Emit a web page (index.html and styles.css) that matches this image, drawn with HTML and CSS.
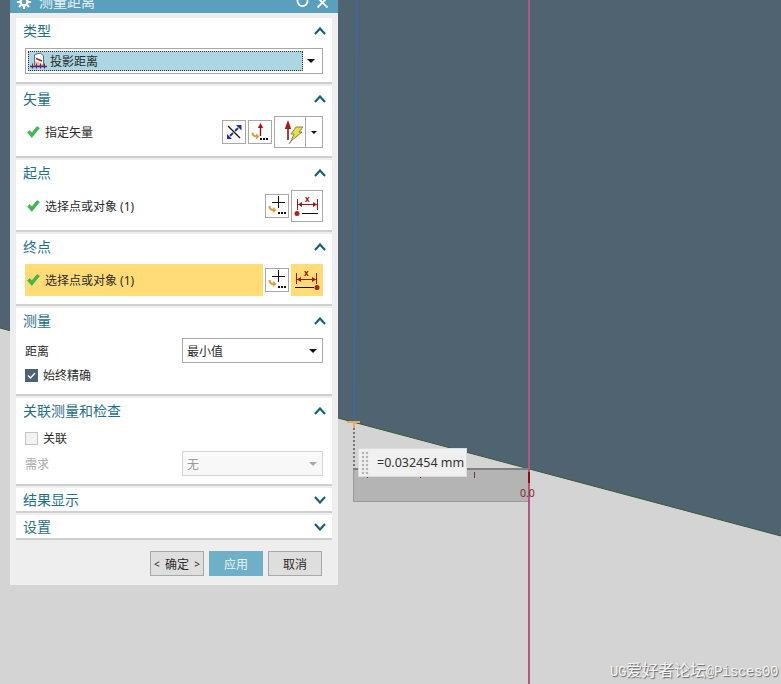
FILE: index.html
```html
<!DOCTYPE html>
<html lang="zh-CN">
<head>
<meta charset="utf-8">
<title>测量距离</title>
<link rel="stylesheet" href="styles.css">
</head>
<body>
<main class="viewport">
  <svg class="scene" width="781" height="684" viewBox="0 0 781 684">
    <rect width="781" height="684" fill="#d4d4d4"/>
    <polygon points="0,328 781,536 781,0 0,0" fill="#4f6470"/>
    <line x1="0" y1="328" x2="781" y2="536" stroke="#3a5a30" stroke-width="1"/>
    <line x1="357" y1="0" x2="354" y2="420" stroke="#3f6aa8" stroke-width="1.200"/>
    <rect x="353.500" y="468.500" width="176" height="33" fill="#b4b4b4" stroke="#999"/>
    <line x1="353" y1="469" x2="529" y2="469" stroke="#808080" stroke-width="2"/>
    <line x1="354" y1="424" x2="354" y2="468" stroke="#777" stroke-width="2" stroke-dasharray="2 2"/>
    <path d="M347 422h13M354 422v6" stroke="#e8a868" stroke-width="2" fill="none"/>
    <path d="M474.500 472v6M420.500 475v3M367.500 475v3" stroke="#8a2a2a" fill="none"/>
    <line x1="529" y1="0" x2="529" y2="684" stroke="#aa5a85" stroke-width="2"/>
    <rect x="528" y="472" width="2" height="11" fill="#8a0f0f"/>
    <text x="520" y="497" class="scene-label">0.0</text>
  </svg>

  <section class="dialog">
    <header class="titlebar">
      <svg class="gear" width="14" height="14" viewBox="0 0 14 14"><circle cx="7" cy="7" r="3.500" fill="none" stroke="#fff" stroke-width="2.400"/><path d="M7 0v3M7 11v3M0 7h3M11 7h3M2 2l2 2M10 10l2 2M12 2l-2 2M4 10l-2 2" stroke="#fff" stroke-width="2"/></svg>
      <span class="title-text">测量距离</span>
      <span class="title-actions">
        <svg width="13" height="13" viewBox="0 0 13 13"><path d="M3 1.500A5 5 0 1 0 10 1.500" fill="none" stroke="#fff" stroke-width="1.800"/></svg>
        <svg width="13" height="13" viewBox="0 0 13 13"><path d="M1.500 1.500l10 10M11.500 1.500l-10 10" stroke="#fff" stroke-width="1.800"/></svg>
      </span>
    </header>

    <div class="group group-type">
      <div class="group-head"><h2>类型</h2><svg class="chev" width="12" height="8" viewBox="0 0 12 8"><path d="M1 7l5-5.500L11 7" /></svg></div>
      <div class="select select-type">
        <div class="select-value">
          <svg width="17" height="18" viewBox="0 0 17 18"><path d="M4.500 2.500l6-1.500 3 3v9.500h-9z" fill="#fff" stroke="#56708a"/><path d="M5 9l8 3v1.500H5z" fill="#e6bcbc"/><path d="M6 6.500l6 2.500" stroke="#b02020" stroke-width="1.600"/><path d="M0 14.500h17" stroke="#1c2fb0" stroke-width="1.500"/><path d="M2.500 11.500v5M6.500 11.500v5M10.500 11.500v5M14.500 11.500v5" stroke="#a01818"/></svg>
          <span>投影距离</span>
        </div>
        <i class="caret"></i>
      </div>
    </div>

    <div class="group group-action">
      <div class="group-head"><h2>矢量</h2><svg class="chev" width="12" height="8" viewBox="0 0 12 8"><path d="M1 7l5-5.500L11 7" /></svg></div>
      <div class="row">
        <svg class="check" width="13" height="12" viewBox="0 0 13 12"><path d="M.5 6.500l4.300 5L12.500 2 10 .5 4.800 7 2.800 4.500z" fill="#3cbb4c" stroke="#2a9a3c" stroke-width=".5"/></svg>
        <span class="row-label">指定矢量</span>
        <span class="tool">
          <svg width="18" height="18" viewBox="0 0 18 18"><path d="M3 3l12 12" stroke="#111" stroke-width="1.200"/><path d="M13 5l-3 3M5 13l3-3" stroke="#1c2f9c" stroke-width="1.800"/><path d="M11 2h5.500v5.500zM2 11l5 5H2z" fill="#1c2f9c"/></svg>
        </span>
        <span class="tool">
          <svg width="20" height="20" viewBox="0 0 20 20"><path d="M10.500 14V5" stroke="#8d1212" stroke-width="1.400"/><path d="M10.500 1L7.800 6h5.400z" fill="#a51616"/><path d="M2.500 10.500q0 4 4 4" fill="none" stroke="#e59a3c" stroke-width="2"/><path d="M6 11.500l3.500 3-3.500 3z" fill="#e59a3c"/><path d="M10 16h2v2h-2zM13 16h2v2h-2zM16 16h2v2h-2z" fill="#111"/></svg>
        </span>
        <span class="split">
          <span class="split-main">
            <svg width="26" height="28" viewBox="0 0 26 28"><path d="M11 22V9" stroke="#8d1212" stroke-width="1.600"/><path d="M11 2L7.800 11h6.400z" fill="#b31515"/><path d="M19 9h7l-4 5h3L14 23l3-7h-3z" fill="#e8dc50" stroke="#6e6a30" stroke-width=".8"/><path d="M14 23l-2 3" stroke="#8a8a80" stroke-width="1.200"/></svg>
          </span>
          <span class="split-arrow"><i class="caret caret-sm"></i></span>
        </span>
      </div>
    </div>

    <div class="group group-action">
      <div class="group-head"><h2>起点</h2><svg class="chev" width="12" height="8" viewBox="0 0 12 8"><path d="M1 7l5-5.500L11 7" /></svg></div>
      <div class="row">
        <svg class="check" width="13" height="12" viewBox="0 0 13 12"><path d="M.5 6.500l4.300 5L12.500 2 10 .5 4.800 7 2.800 4.500z" fill="#3cbb4c" stroke="#2a9a3c" stroke-width=".5"/></svg>
        <span class="row-label">选择点或对象 (1)</span>
        <span class="tool">
          <svg width="20" height="20" viewBox="0 0 20 20"><path d="M11.500 0v12M5 6.500h13" stroke="#111" stroke-width="1.100"/><path d="M2.500 10q0 4 4 4" fill="none" stroke="#e59a3c" stroke-width="2"/><path d="M6 11l3.500 3-3.500 3z" fill="#e59a3c"/><path d="M11 16h2v2h-2zM14 16h2v2h-2zM17 16h2v2h-2z" fill="#111"/></svg>
        </span>
        <span class="tool tool-large">
          <svg width="30" height="26" viewBox="0 0 30 26"><path d="M5.500 6v11M25.500 6v11" stroke="#a01818"/><path d="M6 11.500h19" stroke="#a01818"/><path d="M6 11.500l4-2.500v5zM25 11.500l-4-2.500v5z" fill="#a01818"/><text x="13" y="9" class="dim-x">x</text><path d="M10 20.500h16" stroke="#111"/><circle cx="5" cy="20.500" r="2.500" fill="#b02018"/></svg>
        </span>
      </div>
    </div>

    <div class="group group-action group-active">
      <div class="group-head"><h2>终点</h2><svg class="chev" width="12" height="8" viewBox="0 0 12 8"><path d="M1 7l5-5.500L11 7" /></svg></div>
      <div class="row">
        <span class="hilite">
          <svg class="check" width="13" height="12" viewBox="0 0 13 12"><path d="M.5 6.500l4.300 5L12.500 2 10 .5 4.800 7 2.800 4.500z" fill="#3cbb4c" stroke="#2a9a3c" stroke-width=".5"/></svg>
          <span class="row-label">选择点或对象 (1)</span>
        </span>
        <span class="tool">
          <svg width="20" height="20" viewBox="0 0 20 20"><path d="M11.500 0v12M5 6.500h13" stroke="#111" stroke-width="1.100"/><path d="M2.500 10q0 4 4 4" fill="none" stroke="#e59a3c" stroke-width="2"/><path d="M6 11l3.500 3-3.500 3z" fill="#e59a3c"/><path d="M11 16h2v2h-2zM14 16h2v2h-2zM17 16h2v2h-2z" fill="#111"/></svg>
        </span>
        <span class="tool tool-large tool-hilite">
          <svg width="30" height="26" viewBox="0 0 30 26"><path d="M4.500 6v11M24.500 6v11" stroke="#a01818"/><path d="M5 12.500h19" stroke="#a01818"/><path d="M5 12.500l4-2.500v5zM24 12.500l-4-2.500v5z" fill="#a01818"/><text x="12" y="9" class="dim-x">x</text><path d="M3 20.500h19" stroke="#111"/><circle cx="25" cy="20.500" r="2.500" fill="#b02018"/></svg>
        </span>
      </div>
    </div>

    <div class="group group-measure">
      <div class="group-head"><h2>测量</h2><svg class="chev" width="12" height="8" viewBox="0 0 12 8"><path d="M1 7l5-5.500L11 7" /></svg></div>
      <div class="field">
        <span class="field-label">距离</span>
        <div class="select select-field"><span>最小值</span><i class="caret"></i></div>
      </div>
      <label class="checkline"><span class="box box-on"><svg width="13" height="13" viewBox="0 0 13 13"><path d="M3 6.500l2.500 2.500L10 4" fill="none" stroke="#fff" stroke-width="1.300"/></svg></span><span>始终精确</span></label>
    </div>

    <div class="group group-assoc">
      <div class="group-head"><h2>关联测量和检查</h2><svg class="chev" width="12" height="8" viewBox="0 0 12 8"><path d="M1 7l5-5.500L11 7" /></svg></div>
      <label class="checkline checkline-first"><span class="box"></span><span>关联</span></label>
      <div class="field field-disabled">
        <span class="field-label">需求</span>
        <div class="select select-field"><span>无</span><i class="caret"></i></div>
      </div>
    </div>

    <div class="group group-closed">
      <div class="group-head"><h2>结果显示</h2><svg class="chev" width="12" height="8" viewBox="0 0 12 8"><path d="M1 1l5 5.500L11 1" /></svg></div>
    </div>
    <div class="group group-closed">
      <div class="group-head"><h2>设置</h2><svg class="chev" width="12" height="8" viewBox="0 0 12 8"><path d="M1 1l5 5.500L11 1" /></svg></div>
    </div>

    <footer class="actions">
      <span class="btn btn-ok"><span class="btn-mark">&lt;</span><span>确定</span><span class="btn-mark">&gt;</span></span>
      <span class="btn btn-primary">应用</span>
      <span class="btn">取消</span>
    </footer>
  </section>

  <div class="readout">
    <span class="grip"></span>
    <span>=0.032454 mm</span>
  </div>

  <div class="watermark"><span class="wm-latin">UG</span>爱好者论坛<span class="wm-latin">@Pisces00</span></div>
</main>
</body>
</html>
```
FILE: styles.css
```css
* { box-sizing: border-box; }
html, body { margin: 0; padding: 0; }
body {
  font-family: "Noto Sans", "Noto Sans CJK SC", sans-serif;
  font-size: 12px;
  color: #2a2a2a;
}
.viewport { position: relative; width: 781px; height: 684px; overflow: hidden; }
.scene { position: absolute; left: 0; top: 0; display: block; }
.scene-label { font: 10.500px "Noto Sans", sans-serif; fill: #7d2a2a; }

.dialog {
  position: absolute;
  left: 10px;
  top: -13px;
  width: 328px;
  height: 598px;
  background: #eeeeee;
  display: flex;
  flex-direction: column;
}
.titlebar {
  height: 26px;
  flex: none;
  background: #5a9fbb;
  display: flex;
  align-items: center;
  padding: 4px 9px 0 7px;
  color: #e8f2f6;
}
.gear { flex: none; }
.title-text { margin-left: 8px; font-size: 14px; line-height: 20px; }
.title-actions { margin-left: auto; display: flex; gap: 7px; }

.group {
  background: #fff;
  border-bottom: 2px solid #cfcfcf;
  margin: 0 6px 2px;
  padding: 0 9px;
  flex: none;
}
.group-type { margin-top: 5px; height: 66px; }
.group-action { height: 72px; }
.group-measure, .group-assoc { height: 88px; }
.group-closed { height: 25px; }
.group-head {
  height: 24px;
  padding-top: 1px;
  display: flex;
  align-items: center;
  justify-content: space-between;
}
.group-closed .group-head { height: 23px; }
.group-head h2 {
  margin: 0 0 0 -2px;
  font-size: 14px;
  font-weight: 400;
  line-height: 20px;
  color: #1f6f8c;
}
.chev { margin-right: -3px; fill: none; stroke: #17607a; stroke-width: 2.200; }

.select {
  position: relative;
  display: flex;
  align-items: center;
  background: #fff;
  border: 1px solid #a8a8a8;
}
.select-type {
  height: 26px;
  margin-top: 6px;
  padding: 2px;
  justify-content: space-between;
}
.select-value {
  width: 275px;
  height: 20px;
  background: #add6e3;
  border: 1px dotted #333;
  display: flex;
  align-items: center;
  gap: 3px;
  padding-left: 1px;
}
.caret {
  display: block;
  width: 0;
  height: 0;
  border-left: 4px solid transparent;
  border-right: 4px solid transparent;
  border-top: 4px solid #111;
  margin-right: 5px;
}
.caret-sm { border-left-width: 3px; border-right-width: 3px; border-top-width: 3px; margin: 0; }

.row {
  display: flex;
  align-items: center;
  height: 32px;
  margin-top: 6px;
  gap: 2px;
}
.check { flex: none; margin-left: 2px; }
.row-label { margin-left: 3px; flex: 1; }
.hilite .row-label { margin-left: 5px; }
.tool {
  flex: none;
  width: 24px;
  height: 24px;
  border: 1px solid #a8a8a8;
  display: flex;
  align-items: center;
  justify-content: center;
  background: #fff;
}
.tool-large { width: 32px; height: 32px; }
.tool-hilite { background: #ffdc78; border-color: #ffdc78; }
.split {
  flex: none;
  width: 49px;
  height: 32px;
  border: 1px solid #a8a8a8;
  display: flex;
}
.split-main { width: 31px; display: flex; align-items: center; justify-content: center; border-right: 1px solid #a8a8a8; }
.split-arrow { flex: 1; display: flex; align-items: center; justify-content: center; }
.hilite {
  flex: 1;
  height: 32px;
  background: #ffdc78;
  display: flex;
  align-items: center;
}
.dim-x { font: 700 8px "Noto Sans", sans-serif; fill: #a01818; }

.field {
  display: flex;
  align-items: center;
  justify-content: space-between;
}
.group-measure .field { margin-top: 6px; }
.select-field {
  width: 141px;
  height: 25px;
  padding-left: 4px;
  justify-content: space-between;
}
.field-disabled { color: #a8a8a8; margin-top: 6px; }
.field-disabled .select { border-color: #d4d4d4; background: #f8f8f8; color: #9a9a9a; }
.field-disabled .caret { border-top-color: #a8a8a8; }
.checkline {
  display: flex;
  align-items: center;
  gap: 5px;
  height: 14px;
  margin-top: 5px;
}
.checkline-first { margin-top: 9px; }
.box {
  flex: none;
  width: 13px;
  height: 13px;
  border: 1px solid #c4c4c4;
  background: #f2f2f2;
  display: flex;
}
.box-on { border: 0; background: #4b6373; }

.actions {
  flex: none;
  display: flex;
  justify-content: flex-end;
  gap: 5px;
  padding: 9px 16px 0 0;
}
.btn {
  width: 54px;
  height: 25px;
  display: flex;
  align-items: center;
  justify-content: center;
  background: #dedede;
  border: 1px solid #a8a8a8;
}
.btn-ok { justify-content: space-between; padding: 0 3px; }
.btn-mark { font-size: 10px; }
.btn-primary { background: #70afc8; border-color: #70afc8; color: #e9f4f8; }

.readout {
  position: absolute;
  left: 358px;
  top: 448px;
  width: 109px;
  height: 29px;
  background: #f0f0f0;
  border: 1px solid #dcdcdc;
  display: flex;
  align-items: center;
  gap: 8px;
  padding-left: 2px;
  font-size: 12.500px;
  color: #333;
}
.grip {
  width: 8px;
  height: 24px;
  background-image: radial-gradient(circle, #b4b4b4 1.400px, transparent 1.600px);
  background-size: 4px 4px;
}
.watermark {
  position: absolute;
  right: 3px;
  bottom: 3px;
  font-size: 16px;
  line-height: 18px;
  color: #f4f4f4;
  text-shadow: 1px 1px 1px #666;
  white-space: nowrap;
}
.wm-latin { font-family: "Liberation Mono", monospace; font-size: 14px; letter-spacing: -0.400px; }
```
